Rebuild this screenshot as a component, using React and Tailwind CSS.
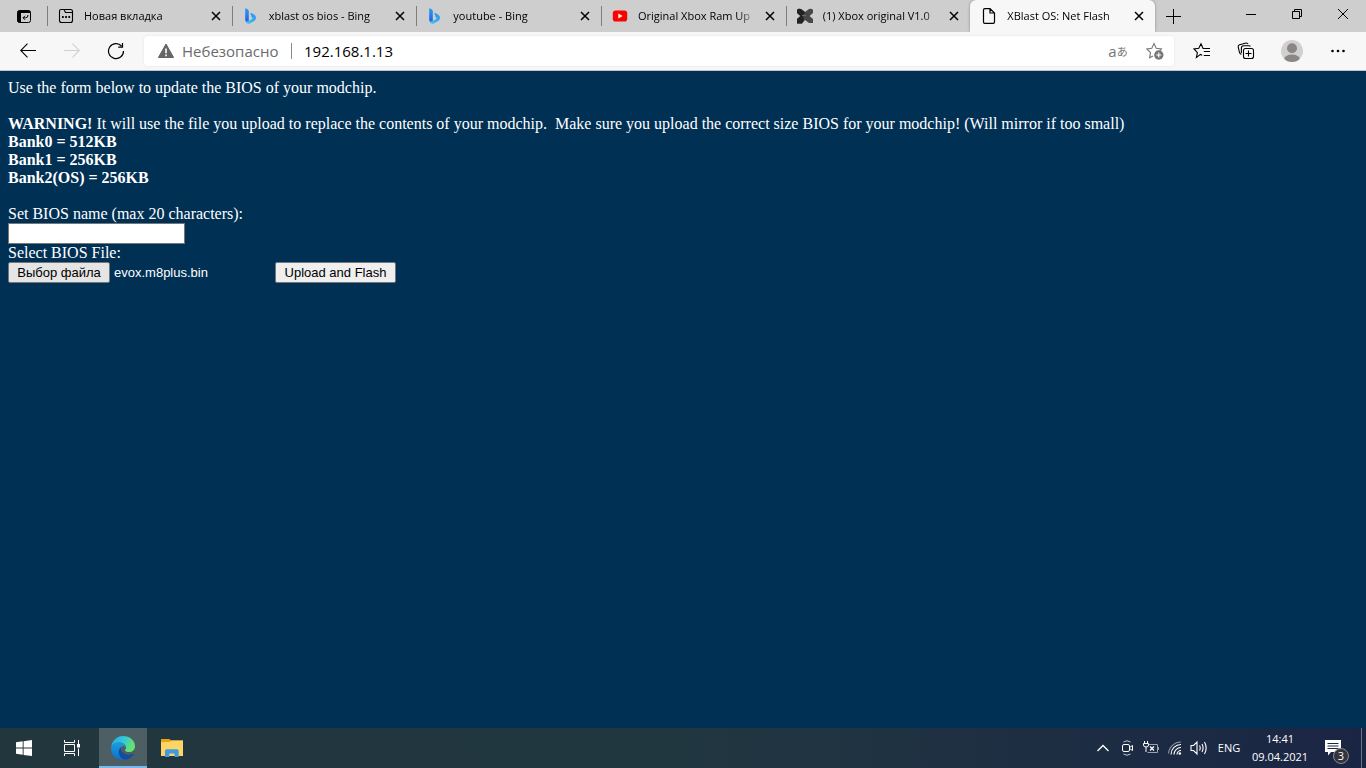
import { useRef, useState } from 'react';

// Tabs shown in the title bar, the last one is the open page
const TABS = [
  { id: 'new', title: 'Новая вкладка', icon: NewTabIcon },
  { id: 'bing-1', title: 'xblast os bios - Bing', icon: BingIcon },
  { id: 'bing-2', title: 'youtube - Bing', icon: BingIcon },
  { id: 'youtube', title: 'Original Xbox Ram Up', icon: YoutubeIcon },
  { id: 'xbox', title: '(1) Xbox original V1.0', icon: CrossIcon },
  { id: 'flash', title: 'XBlast OS: Net Flash', icon: PageIcon },
];

const BANKS = ['Bank0 = 512KB', 'Bank1 = 256KB', 'Bank2(OS) = 256KB'];

// Base svg for the 16px line icons
function Icon({ children, className = 'size-4', strokeWidth = 1, viewBox = '0 0 16 16' }) {
  return (
    <svg viewBox={viewBox} className={`shrink-0 ${className}`} fill="none" stroke="currentColor" strokeWidth={strokeWidth} aria-hidden="true">
      {children}
    </svg>
  );
}

function NewTabIcon() {
  return (
    <Icon strokeWidth={1.1}>
      <path d="M1.5 4V3Q1.5 1.5 3 1.5H6L7.5 4.5H14.5V12.5Q14.5 14.5 12.5 14.5H3.5Q1.5 14.5 1.5 12.5Z M6 1.5H12.5Q14.5 1.5 14.5 3.5V5" />
      <path d="M4 9H5.7M7.2 9H8.9M10.4 9H12.1" strokeWidth="1.8" />
    </Icon>
  );
}

function BingIcon() {
  return (
    <Icon>
      <defs>
        <linearGradient id="bing-stem" x1="0" y1="0" x2="0" y2="1">
          <stop offset="0" stopColor="#2b9df5" />
          <stop offset="1" stopColor="#2458e8" />
        </linearGradient>
        <linearGradient id="bing-bowl" x1="1" y1="0" x2="0" y2="1">
          <stop offset="0" stopColor="#2f8df4" />
          <stop offset="1" stopColor="#35cdf0" />
        </linearGradient>
      </defs>
      <path d="M2.2.3 4.4 1.1Q5.8 1.8 5.8 3.4V12.2L4 14.5Q2.2 13.8 2.2 12Z" fill="url(#bing-stem)" stroke="none" />
      <path d="M7.3 5Q7.6 4.6 8.4 5L11 6.4Q13.2 7.6 13 10.2 12.8 12 10.8 13.2L6.8 15.4Q4.6 16.2 3.1 14.4 2.8 13.8 2.9 13.4L5.8 13 9.8 10.6 8.6 9.2Z" fill="url(#bing-bowl)" stroke="none" />
    </Icon>
  );
}

function YoutubeIcon() {
  return (
    <Icon>
      <rect x=".8" y="2.4" width="14.4" height="11.2" rx="2.8" fill="#f00" stroke="none" />
      <path d="M6.3 5.6 10.6 8 6.3 10.4Z" fill="#fff" stroke="none" />
    </Icon>
  );
}

function CrossIcon() {
  return (
    <Icon>
      <path d="M0 2Q1 0 4 1L8 4 12 1Q15 0 16 2V5L12.6 8 16 11V15H12L8 12 5 15.5H0V11L3.4 8 0 5Z" fill="#484848" stroke="none" />
      <path d="M0 2Q1 0 4 1L8 4 6 8 7 12 5 15.5H0V11L3.4 8 0 5Z" fill="#232323" stroke="none" />
      <path d="M5 7.5H9" stroke="#6b6b6b" />
    </Icon>
  );
}

function PageIcon() {
  return (
    <Icon strokeWidth={1.2}>
      <path d="M2.5 1.9Q2.5.6 3.8.6H9L13.5 5V14Q13.5 15.4 12.2 15.4H3.8Q2.5 15.4 2.5 14.1Z M9 .6V5H13.5" />
    </Icon>
  );
}

function Tab({ tab, active }) {
  const TabIcon = tab.icon;
  return (
    <div className={`flex h-8 min-w-0 flex-1 items-center pr-1 ${active ? 'rounded-t-md bg-[#f7f7f7] shadow-[0_0_3px_rgba(0,0,0,0.35)]' : ''}`}>
      <span className={`h-5 w-px shrink-0 ${active ? '' : 'bg-[#7d7d7d]'}`} />
      <button type="button" role="tab" aria-selected={active} className="flex min-w-0 flex-1 items-center gap-2.5 pl-2.5 text-left">
        <TabIcon />
        <span className="min-w-0 flex-1 overflow-hidden whitespace-nowrap text-[11px] leading-4 [mask-image:linear-gradient(to_right,black_100px,transparent_119px)]">
          {tab.title}
        </span>
      </button>
      <button type="button" aria-label="Закрыть вкладку" className="flex size-6 shrink-0 items-center justify-center">
        <Icon className="size-3" strokeWidth={1.5} viewBox="0 0 12 12">
          <path d="M2 2 10 10M10 2 2 10" />
        </Icon>
      </button>
    </div>
  );
}

function TitleBar() {
  return (
    <div className="flex h-8 shrink-0 bg-[#cecece]">
      <button type="button" aria-label="Меню вкладок" className="flex w-[47px] shrink-0 items-center justify-center">
        <Icon strokeWidth={1}>
          <rect x="1.5" y="2.5" width="13" height="12" rx="2" />
          <path d="M1.5 4.5V12.5Q1.5 14.5 3.5 14.5H5V5H14.5V4.5Q14.5 2.5 12.5 2.5H3.5Q1.5 2.5 1.5 4.5Z" fill="currentColor" stroke="none" />
          <path d="M12 7Q12 9.8 9.6 9.8H7.2M9 7.8 7 9.8 9 11.8" />
        </Icon>
      </button>
      <div role="tablist" className="flex w-[1108px] min-w-0">
        {TABS.map((tab) => (
          <Tab key={tab.id} tab={tab} active={tab.id === 'flash'} />
        ))}
      </div>
      <button type="button" aria-label="Новая вкладка" className="flex w-9 shrink-0 items-center justify-center">
        <Icon>
          <path d="M8.5 1V16M1 8.5H16" />
        </Icon>
      </button>
      <div className="ml-auto flex shrink-0">
        <button type="button" aria-label="Свернуть" className="flex h-7 w-[46px] items-center justify-center">
          <Icon className="size-2.5" viewBox="0 0 10 10"><path d="M0 5.5H10" /></Icon>
        </button>
        <button type="button" aria-label="Свернуть в окно" className="flex h-7 w-[46px] items-center justify-center">
          <Icon className="size-2.5" viewBox="0 0 10 10"><path d="M.5 2.5H7.5V9.5H.5ZM2.5 2.5V.5H9.5V7.5H7.5" /></Icon>
        </button>
        <button type="button" aria-label="Закрыть" className="flex h-7 w-[46px] items-center justify-center">
          <Icon className="size-2.5" viewBox="0 0 10 10"><path d="M0 0 10 10M10 0 0 10" /></Icon>
        </button>
      </div>
    </div>
  );
}

function ToolButton({ label, children, className = 'w-11' }) {
  return (
    <button type="button" aria-label={label} className={`flex h-8 shrink-0 items-center justify-center ${className}`}>
      {children}
    </button>
  );
}

function Toolbar() {
  const [url, setUrl] = useState('192.168.1.13');

  return (
    <div className="flex h-[39px] shrink-0 items-center border-b border-[#c4c4c4] bg-[#f7f7f7] px-1.5">
      <ToolButton label="Назад">
        <Icon strokeWidth={1.1}><path d="M.5 7.5H16M7.5.7.7 7.5 7.5 14.3" /></Icon>
      </ToolButton>
      <ToolButton label="Вперед" className="w-11 text-[#cfcfcf]">
        <Icon strokeWidth={1.1}><path d="M0 7.5H15.5M8.5.7 15.3 7.5 8.5 14.3" /></Icon>
      </ToolButton>
      <ToolButton label="Обновить">
        <Icon className="size-[18px]" strokeWidth={1.2} viewBox="0 0 18 18">
          <path d="M14.5 4A7.5 7.5 0 1 0 16.5 9M15.5 1V5.2H11.2" />
        </Icon>
      </ToolButton>

      <div className="ml-1.5 flex h-[30px] min-w-0 flex-1 items-center rounded bg-white pl-3.5 shadow-[0_0_3px_rgba(0,0,0,0.08)]">
        <Icon className="size-4 text-[#666]">
          <path d="M8 1 15.6 14.5H.4Z" fill="currentColor" strokeLinejoin="round" />
          <path d="M8 5.5V10.2M8 11.5V13.2" stroke="#fff" strokeWidth="1.6" />
        </Icon>
        <span className="ml-2 w-[101px] whitespace-nowrap text-[15px] leading-5 text-[#6b6b6b]">Небезопасно</span>
        <span className="ml-2 h-4 w-px bg-[#8a8a8a]" />
        <input
          type="text"
          aria-label="Адресная строка"
          value={url}
          onChange={(e) => setUrl(e.target.value)}
          className="ml-3 h-6 min-w-0 flex-1 text-[15px] leading-5 text-black outline-none"
        />
        <button type="button" aria-label="Перевести" className="flex w-10 items-center justify-center whitespace-nowrap text-[#767676]">
          <span className="text-[15px] leading-4">a</span>
          <span className="font-['Noto_Sans_CJK_JP',sans-serif] text-[11px] leading-4">あ</span>
        </button>
        <button type="button" aria-label="Добавить в избранное" className="flex w-9 items-center justify-center pr-0.5 text-[#767676]">
          <Icon className="size-[18px]" strokeWidth={1.1} viewBox="0 0 18 18">
            <path d="M7 14 3.6 15.8 4.5 10.6.9 7 5.8 6.3 8 1.6 10.2 6.3 15.4 7 13.6 8.8" />
            <circle cx="12.8" cy="13" r="4.7" fill="currentColor" stroke="none" />
            <path d="M12.8 10.5V15.5M10.3 13H15.3" stroke="#fff" />
          </Icon>
        </button>
      </div>

      <ToolButton label="Избранное" className="ml-1.5 w-11">
        <Icon className="size-[18px]" strokeWidth={1.1} viewBox="0 0 18 18">
          <path d="M9.2 13.2 7.5 12.4 3.4 15.4 4.4 10.6 1 7 5.8 6.3 8 1.8 10.1 6.5H17M10.8 9.5H17M10.8 13.5H17" />
        </Icon>
      </ToolButton>
      <ToolButton label="Коллекции">
        <Icon className="size-[18px]" strokeWidth={1.1} viewBox="0 0 18 18">
          <rect x="6.5" y="6.5" width="10" height="10" rx="2" />
          <path d="M11.5 8.5V14.5M8.5 11.5H14.5M4.4 12.4Q2.8 12 2.4 10.2L1.2 4.8Q1 3.4 2.5 2.8L9.2 1Q10.6.9 11 2.2M4.4 11V6Q4.4 3.8 6.6 3.8H12.2Q13 3.8 13.4 4.5" />
        </Icon>
      </ToolButton>
      <ToolButton label="Профиль" className="w-12">
        <svg viewBox="0 0 22 22" className="size-[22px]" aria-hidden="true">
          <clipPath id="avatar"><circle cx="11" cy="11" r="11" /></clipPath>
          <g clipPath="url(#avatar)">
            <rect width="22" height="22" fill="#d2d0ce" />
            <circle cx="11" cy="8.3" r="5" fill="#8a8685" />
            <ellipse cx="11" cy="19.5" rx="8" ry="5" fill="#8a8685" />
          </g>
        </svg>
      </ToolButton>
      <ToolButton label="Настройки и другое">
        <Icon>
          <g fill="currentColor" stroke="none">
            <circle cx="2.5" cy="8" r="1.3" />
            <circle cx="8" cy="8" r="1.3" />
            <circle cx="13.5" cy="8" r="1.3" />
          </g>
        </Icon>
      </ToolButton>
    </div>
  );
}

function FlashPage() {
  const fileRef = useRef(null);
  const [fileName, setFileName] = useState('evox.m8plus.bin');

  const handleFile = (e) => {
    const file = e.target.files[0];
    if (file) setFileName(file.name);
  };

  return (
    <main className="flex-1 bg-[#003054] p-2 font-['Liberation_Serif',serif] text-base leading-[18px] text-white">
      <p>Use the form below to update the BIOS of your modchip.</p>
      <p className="mt-[18px]">
        <b>WARNING!</b> It will use the file you upload to replace the contents of your modchip.&nbsp; Make sure you upload the correct size BIOS for your modchip! (Will mirror if too small)
      </p>
      {BANKS.map((bank) => (
        <p key={bank} className="font-bold">{bank}</p>
      ))}

      <form className="mt-[18px]" onSubmit={(e) => e.preventDefault()}>
        <label htmlFor="bios-name" className="block">Set BIOS name (max 20 characters):</label>
        <input
          id="bios-name"
          type="text"
          maxLength={20}
          className="block h-[21px] w-[177px] border border-[#767676] bg-white px-1 font-['Liberation_Sans',sans-serif] text-[13px] text-black"
        />
        <label htmlFor="bios-file" className="block">Select BIOS File:</label>
        <div className="flex font-['Liberation_Sans',sans-serif] text-[13px]">
          <input id="bios-file" ref={fileRef} type="file" onChange={handleFile} className="hidden" />
          <div className="flex w-[267px] items-center gap-1">
            <button
              type="button"
              onClick={() => fileRef.current.click()}
              className="h-[21px] w-[102px] whitespace-nowrap rounded-xs border border-[#767676] bg-[#e5e5e5] text-black"
            >
              Выбор файла
            </button>
            <span>{fileName}</span>
          </div>
          <button type="submit" className="h-[21px] w-[121px] whitespace-nowrap rounded-xs border border-[#767676] bg-[#efefef] text-black">
            Upload and Flash
          </button>
        </div>
      </form>
    </main>
  );
}

function EdgeLogo() {
  return (
    <svg viewBox="0 0 24 24" className="size-6" aria-hidden="true">
      <defs>
        <linearGradient id="edge-top" x1="0" y1="0" x2="1" y2=".4">
          <stop offset="0" stopColor="#1fa5e0" />
          <stop offset=".5" stopColor="#33c5dc" />
          <stop offset="1" stopColor="#66e36c" />
        </linearGradient>
        <linearGradient id="edge-left" x1="0" y1="0" x2="0" y2="1">
          <stop offset="0" stopColor="#1b9de2" />
          <stop offset="1" stopColor="#0b6fce" />
        </linearGradient>
      </defs>
      <path d="M.3 10.5C1.2 4.2 6 0 12 0 19 0 24 4.8 24 10.2 24 13.7 21.3 16 18 16 15.5 16 14 15.2 14 14.4 14 13.8 15 13.4 15 11.6 15 8.6 11.8 6.6 8.2 6.6 4.5 6.6 1.8 8.2.3 10.5Z" fill="url(#edge-top)" />
      <path d="M.2 10.8C2 8 5 6.6 8.2 6.6 12 6.6 15 8.8 15 11.5 14.4 10.4 13.2 9.8 11.6 10.2 9 11 7.6 13.6 7.8 16.6 8.2 20.4 11 23.2 14 23.8 6.5 24.8-.8 19.5.2 10.8Z" fill="url(#edge-left)" />
      <path d="M9.6 11.4C7.4 14 7.2 17.6 9 20.5 10.4 22.6 12.5 23.6 14.6 23.7 18 23.2 21 21.2 22.6 18.4 22.9 17.8 22.5 17.4 21.9 17.7 17.3 20 9.8 18.2 9.6 11.4Z" fill="#114f9c" />
    </svg>
  );
}

function FolderIcon() {
  return (
    <svg viewBox="0 0 22 18" className="h-[18px] w-[22px]" aria-hidden="true">
      <path d="M0 0H8.5L10 1.5H22V6H0Z" fill="#e8a317" />
      <path d="M0 3H9L10 1.5H22V17H0Z" fill="#ffd467" />
      <path d="M4 18V12Q4 10.3 5.7 10.3H16Q17.7 10.3 17.7 12V18H13.5V14.5H8.3V18Z" fill="#3f9be0" />
    </svg>
  );
}

function TaskbarButton({ label, active, children }) {
  return (
    <button
      type="button"
      aria-label={label}
      className={`flex w-12 items-center justify-center ${active ? 'bg-white/20 shadow-[inset_0_-2px_0_#76b9ed]' : ''}`}
    >
      {children}
    </button>
  );
}

function Taskbar() {
  return (
    <footer className="flex h-10 shrink-0 bg-linear-to-r from-[#21363d] via-[#213740] to-[#1a2544] text-white">
      <TaskbarButton label="Пуск">
        <Icon>
          <path d="M0 2.3 6.7 1.3V7.6H0ZM7.6 1.2 16 0V7.6H7.6ZM0 8.5H6.7V14.8L0 13.8ZM7.6 8.5H16V16L7.6 14.9Z" fill="currentColor" stroke="none" />
        </Icon>
      </TaskbarButton>
      <TaskbarButton label="Представление задач">
        <Icon>
          <path d="M.5 0V2.5H10.5V0M.5 4.5H10.5V11.5H.5ZM.5 16V13.5H10.5V16M14.5 0V4M14.5 8.5V16" />
          <rect x="13" y="4" width="3" height="3.5" fill="currentColor" stroke="none" />
        </Icon>
      </TaskbarButton>
      <div className="ml-[3px] flex gap-px">
        <TaskbarButton label="Microsoft Edge" active><EdgeLogo /></TaskbarButton>
        <TaskbarButton label="Проводник"><FolderIcon /></TaskbarButton>
      </div>

      <div className="ml-auto flex items-center">
        <button type="button" aria-label="Скрытые значки" className="flex w-6 justify-center">
          <Icon className="size-3" strokeWidth={1.3} viewBox="0 0 12 12"><path d="M.5 9 6 3.5 11.5 9" /></Icon>
        </button>
        <button type="button" aria-label="Камера" className="flex w-6 justify-center">
          <Icon>
            <path d="M4.5 2Q8-.5 11.5 2M4.5 14Q8 16.5 11.5 14" stroke="#c4c9d1" />
            <rect x="3.5" y="4.5" width="7" height="7" rx="1.5" />
            <path d="M10.5 7.5 13.5 5.5V10.5L10.5 8.5" />
          </Icon>
        </button>
        <button type="button" aria-label="Питание" className="flex w-6 justify-center">
          <Icon>
            <path d="M6 4.5H14.5V12.5H4.5M15.5 7V10" stroke="#98a0ad" />
            <path d="M1.5 1V3.5M4.5 1V3.5M.5 3.5H5.5V5Q5.5 7 3 7 .5 7 .5 5ZM3 7V12" />
            <path d="M7 6.5 11 10.5M11 6.5 7 10.5" strokeWidth="1.3" />
          </Icon>
        </button>
        <button type="button" aria-label="Сеть" className="flex w-6 justify-center">
          <Icon strokeWidth={1.1}>
            <path d="M4 14.5A10 10 0 0 1 14 4.5M7 14.5A7 7 0 0 1 14 7.5M10 14.5A4 4 0 0 1 14 10.5" />
            <path d="M1.5 13.5A12.5 12.5 0 0 1 14 2" stroke="#8c98a4" />
            <circle cx="12.8" cy="13.5" r="1.3" fill="currentColor" stroke="none" />
          </Icon>
        </button>
        <button type="button" aria-label="Громкость" className="flex w-6 justify-center">
          <Icon className="h-4 w-[18px]" strokeWidth={1.1} viewBox="0 0 18 16">
            <path d="M1 5.5H3.5L7 2V14L3.5 10.5H1ZM9.5 5.5Q11 8 9.5 10.5M12 4Q14.2 8 12 12M14.5 2Q17.8 8 14.5 14" />
          </Icon>
        </button>
        <button type="button" className="w-9 text-center text-[11px] leading-4">ENG</button>
        <button type="button" className="w-[66px] text-center text-[11px] leading-[18px]">
          14:41
          <br />
          09.04.2021
        </button>
        <button type="button" aria-label="Центр уведомлений" className="relative flex h-10 w-10 items-center justify-center">
          <Icon>
            <path d="M0 0H16V12H6L3 15.5V12H0Z" fill="currentColor" stroke="none" />
            <path d="M2.5 3.5H13.5M2.5 6H13.5M2.5 8.5H13.5" stroke="#1b2944" />
          </Icon>
          <span className="absolute left-5 top-5 flex size-4 items-center justify-center rounded-full border border-[#8b8b8b] bg-[#33353a] text-[11px] leading-4">3</span>
        </button>
        <span className="ml-2 mr-1 h-10 w-px bg-[#6b7486]" />
      </div>
    </footer>
  );
}

export default function App() {
  return (
    <div className="flex min-h-screen flex-col font-['Open_Sans','Noto_Sans',sans-serif] text-black">
      <TitleBar />
      <Toolbar />
      <FlashPage />
      <Taskbar />
    </div>
  );
}
